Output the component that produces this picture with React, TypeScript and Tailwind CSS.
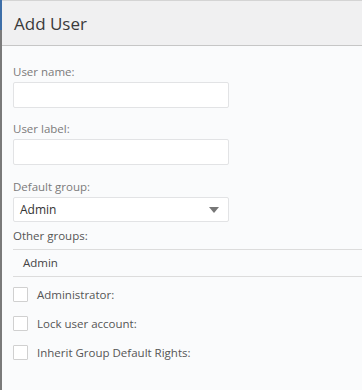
import React from 'react';

const font = { fontFamily: '"Open Sans", "Noto Sans", sans-serif' };

const Check: React.FC<{ label: string }> = ({ label }) => (
  <label className="flex items-center h-[29px]">
    <span className="w-[15px] h-[15px] border border-[#d0d0d0] bg-white rounded-[1px]" />
    <span className="ml-[9px] text-[11.5px] text-[#555]">{label}</span>
  </label>
);

export default function App() {
  return (
    <div className="flex w-[362px] h-[390px] overflow-hidden" style={font}>
      <div className="w-[2px] flex flex-col shrink-0">
        <div className="h-[30px] bg-[#3d6ea8]" />
        <div className="flex-1 bg-[#7a7a7a]" />
      </div>
      <div className="flex-1 flex flex-col bg-[#fafbfc]">
        <div className="h-[46px] bg-[#f0f0f1] border-t border-[#d4d4d4] border-b border-b-[#c6c6c6] flex items-center pl-[12px]">
          <h1 className="text-[17px] text-[#3a3a3a] mt-[1px]">Add User</h1>
        </div>

        <div className="pl-[11px] pt-[18px]">
          <div className="text-[11.5px] text-[#7a7a7a] leading-[16px]">User name:</div>
          <div className="mt-[2px] w-[216px] h-[26px] border border-[#e2e3e5] bg-white rounded-[2px]" />

          <div className="mt-[13px] text-[11.5px] text-[#7a7a7a] leading-[16px]">User label:</div>
          <div className="mt-[2px] w-[216px] h-[26px] border border-[#e2e3e5] bg-white rounded-[2px]" />

          <div className="mt-[14px] text-[11.5px] text-[#7a7a7a] leading-[16px]">Default group:</div>
          <div className="mt-[2px] w-[216px] h-[25px] border border-[#e2e3e5] bg-white rounded-[2px] flex items-center justify-between pl-[6px] pr-[9px]">
            <span className="text-[12px] text-[#333]">Admin</span>
            <svg width="10" height="6" viewBox="0 0 10 6">
              <path d="M0 0 L10 0 L5 6 Z" fill="#777" />
            </svg>
          </div>

          <div className="mt-[5px] text-[11.5px] text-[#555] leading-[17px]">Other groups:</div>
          <div className="mt-[5px] border-t border-b border-[#dcdcdc] h-[28px] flex items-center pl-[10px]">
            <span className="text-[11.5px] text-[#444]">Admin</span>
          </div>

          <div className="mt-[3px] flex flex-col">
            <Check label="Administrator:" />
            <Check label="Lock user account:" />
            <Check label="Inherit Group Default Rights:" />
          </div>
        </div>
      </div>
    </div>
  );
}
